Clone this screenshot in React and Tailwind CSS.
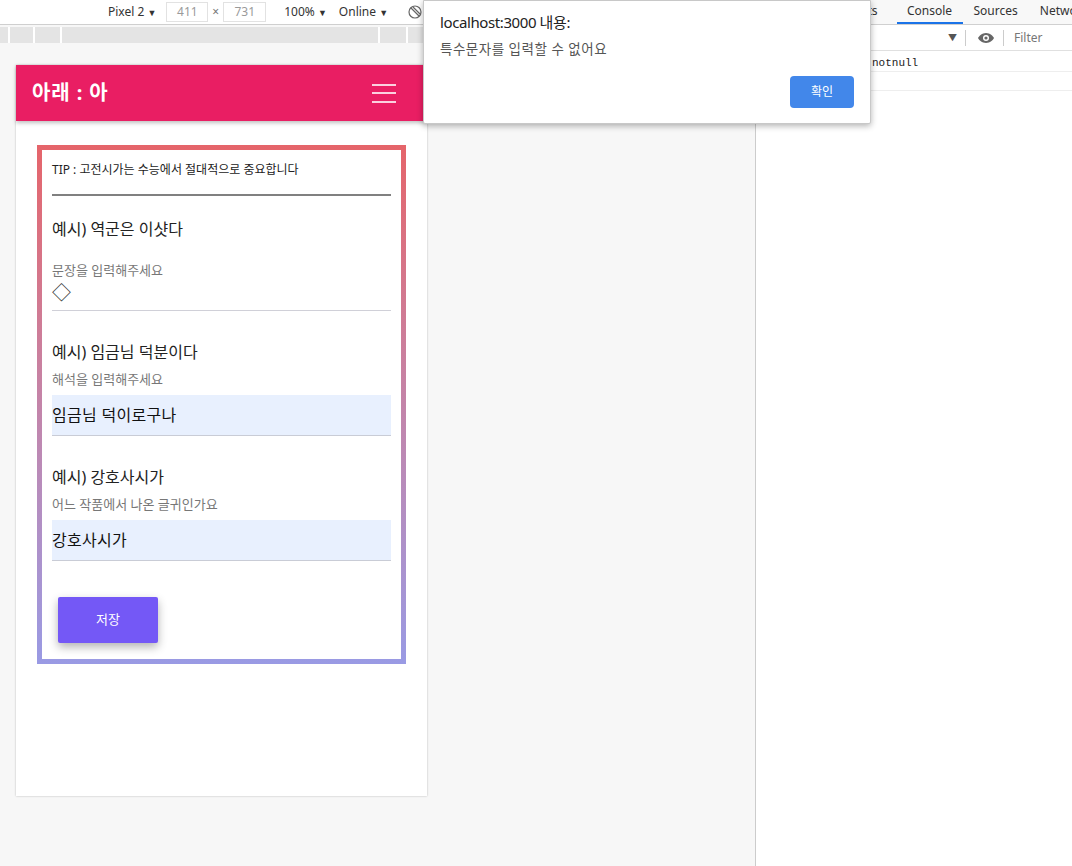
import React from "react";

const sans = "font-['Noto_Sans','Noto_Sans_CJK_KR',sans-serif]";

const Toolbar = () => (
  <div className="h-[25px] bg-white border-b border-[#cfcfcf] flex items-center text-[12px] text-[#333]">
    <span className="ml-[108px]">Pixel 2 <span className="text-[9px]">▼</span></span>
    <div className="ml-[10px] w-[42px] h-[20px] border border-[#e2e2e2] flex items-center justify-center text-[#9a9a9a]">411</div>
    <span className="mx-[4px] text-[#777]">×</span>
    <div className="w-[43px] h-[20px] border border-[#e2e2e2] flex items-center justify-center text-[#9a9a9a]">731</div>
    <span className="ml-[18px]">100% <span className="text-[9px]">▼</span></span>
    <span className="ml-[12px]">Online <span className="text-[9px]">▼</span></span>
    <svg className="ml-[20px]" width="14" height="14" viewBox="0 0 14 14" fill="none" stroke="#666" strokeWidth="1.2">
      <circle cx="7" cy="7" r="6" />
      <path d="M3 3l8 8M5 2l7 7" />
    </svg>
  </div>
);

const Ruler = () => (
  <div className="mt-[2px] h-[16px] bg-[#e4e4e4] flex">
    <div className="w-[10px] border-r-2 border-white" />
    <div className="w-[25px] border-r-2 border-white" />
    <div className="w-[27px] border-r-2 border-white" />
    <div className="w-[318px] border-r-2 border-white" />
    <div className="w-[28px] border-r-2 border-white" />
    <div className="flex-1" />
  </div>
);

const Field = ({ title, label, value, filled }) => (
  <div>
    <p className="mt-[29px] text-[16px] leading-[24px] text-[#222]">{title}</p>
    <p className="mt-[6px] text-[13px] leading-[18px] text-[#777]">{label}</p>
    <div
      className={
        "mt-[7px] h-[41px] border-b border-[#c9ccd6] flex items-center text-[16px] text-[#111] tracking-[0.3px] " +
        (filled ? "bg-[#e8f0fe]" : "")
      }
    >
      {value}
    </div>
  </div>
);

const Phone = () => (
  <div className={"ml-[16px] mt-[22px] w-[411px] h-[731px] bg-white shadow-[0_0_2px_rgba(0,0,0,0.25)] " + sans}>
    <header className="h-[56px] bg-[#e91e63] flex items-center justify-between px-[16px] shadow-[0_2px_4px_rgba(0,0,0,0.25)]">
      <h1 className="text-white text-[20px] font-bold tracking-[0.9px]">아래 : 아</h1>
      <div className="mr-[15px] w-[24px] flex flex-col gap-[6.5px]">
        <span className="h-[2px] bg-[#fbd0df]" />
        <span className="h-[2px] bg-[#fbd0df]" />
        <span className="h-[2px] bg-[#fbd0df]" />
      </div>
    </header>

    <div className="ml-[21px] mt-[24px] w-[369px] p-[5px] bg-linear-to-b from-[#e5646a] to-[#999ae4]">
      <div className="bg-white px-[10px] pt-[12px] pb-[16px]">
        <p className="text-[12px] leading-[16px] text-[#222]">TIP : 고전시가는 수능에서 절대적으로 중요합니다</p>
        <div className="mt-[16px] h-[2px] bg-[#808080]" />

        <p className="mt-[21px] text-[16px] leading-[24px] text-[#222]">예시) 역군은 이샷다</p>
        <p className="mt-[20px] text-[13px] leading-[18px] text-[#777]">문장을 입력해주세요</p>
        <div className="mt-[3px] h-[29px] border-b border-[#d0d0d8] text-[19px] leading-[22px] text-[#333]">◇</div>

        <Field title="예시) 임금님 덕분이다" label="해석을 입력해주세요" value="임금님 덕이로구나" filled />
        <Field title="예시) 강호사시가" label="어느 작품에서 나온 글귀인가요" value="강호사시가" filled />

        <button
          type="button"
          className="mt-[36px] ml-[6px] w-[100px] h-[46px] bg-[#7458f6] text-white text-[13px] rounded-[2px] shadow-[0_4px_10px_rgba(0,0,0,0.3)]"
        >
          저장
        </button>
      </div>
    </div>
  </div>
);

const DevTools = () => (
  <div className={"flex-1 min-w-0 overflow-hidden bg-white text-[12px] text-[#333] " + sans}>
    <div className="h-[25px] border-b border-[#d0d0d0] bg-[#f8f8f8] flex items-end whitespace-nowrap">
      <span className="ml-[104px] pb-[4px]">nts</span>
      <div className="ml-[19px] w-[66px] h-[25px] flex flex-col justify-end items-center shrink-0">
        <span className="pb-[2px]">Console</span>
        <span className="w-full h-[2px] bg-[#1a73e8]" />
      </div>
      <span className="ml-[11px] pb-[4px]">Sources</span>
      <span className="ml-[22px] pb-[4px]">Netwo</span>
    </div>
    <div className="h-[26px] border-b border-[#e0e0e0] flex items-center">
      <span className="ml-[192px] text-[9px] text-[#555]">▼</span>
      <span className="ml-[8px] w-px h-[16px] bg-[#ccc]" />
      <svg className="ml-[11px]" width="18" height="12" viewBox="0 0 18 12">
        <path d="M9 1C5 1 2 4 1 6c1 2 4 5 8 5s7-3 8-5c-1-2-4-5-8-5z" fill="#666" />
        <circle cx="9" cy="6" r="3" fill="white" />
        <circle cx="9" cy="6" r="1.6" fill="#666" />
      </svg>
      <span className="ml-[8px] w-px h-[16px] bg-[#ccc]" />
      <span className="ml-[10px] text-[#777]">Filter</span>
    </div>
    <div className="h-[21px] border-b border-[#eee] flex items-center pt-[4px] pl-[116px] font-['Liberation_Mono',monospace] text-[11px] text-[#222]">
      notnull
    </div>
    <div className="h-[19px] border-b border-[#eee]" />
  </div>
);

const Alert = () => (
  <div className={"absolute left-[423px] top-0 w-[448px] h-[124px] bg-white border border-[#c8c8c8] rounded-b-[2px] shadow-[0_2px_6px_rgba(0,0,0,0.3)] px-[16px] " + sans}>
    <p className="mt-[10px] text-[15px] leading-[22px] text-[#222] tracking-[-0.4px]">localhost:3000 내용:</p>
    <p className="mt-[7px] text-[13.5px] leading-[18px] text-[#555] tracking-[0.5px]">특수문자를 입력할 수 없어요</p>
    <div className="flex justify-end mt-[18px]">
      <button type="button" className="w-[64px] h-[32px] bg-[#4287ea] rounded-[4px] text-white text-[12px]">확인</button>
    </div>
  </div>
);

export default function App() {
  return (
    <div className="relative w-[1072px] h-[866px] flex overflow-hidden bg-white">
      <div className="w-[756px] shrink-0 h-full bg-[#f7f7f7] border-r border-[#cccccc]">
        <Toolbar />
        <Ruler />
        <Phone />
      </div>
      <DevTools />
      <Alert />
    </div>
  );
}
